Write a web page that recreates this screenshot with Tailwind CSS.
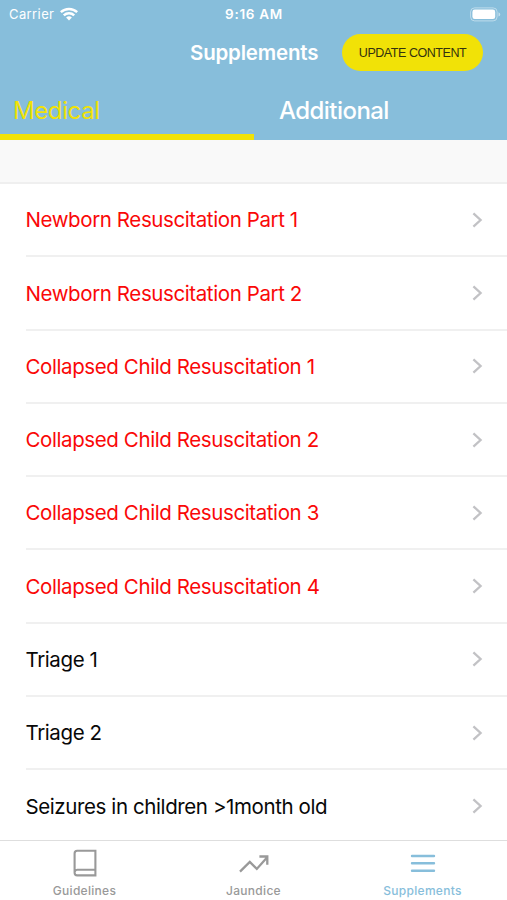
<!DOCTYPE html>
<html lang="en">
<head>
<meta charset="utf-8">
<title>Supplements</title>
<script src="https://cdn.jsdelivr.net/npm/@tailwindcss/browser@4"></script>
</head>
<body class="bg-white">
<div class="w-[507px] h-[900px] flex flex-col overflow-hidden bg-white font-['Inter','Liberation_Sans',sans-serif]">
  <header class="h-[140px] shrink-0 bg-[#87bedb] text-white flex flex-col">
    <div class="h-[27px] grid grid-cols-[160px_1fr_160px] items-center pl-[7px] pr-[6px] text-[13px] leading-[28px]">
      <div class="flex items-center gap-[6px] pl-[2px]">
        <span class="tracking-[0.4px]">Carrier</span>
        <svg class="w-[18px] h-[14px]" viewBox="0 0 18 14" fill="none" stroke="#fff" stroke-width="2.5"><path d="M.8 5.2a11.8 11.8 0 0 1 16.4 0M3.8 8.4a7.5 7.5 0 0 1 10.4 0"/><path d="M9 13.6l-2.9-3a4.2 4.2 0 0 1 5.8 0z" fill="#fff" stroke="none"/></svg>
      </div>
      <div class="text-center font-semibold text-[13.5px] tracking-[0.7px]"><span>9:16 AM</span></div>
      <div class="flex justify-end">
        <svg class="w-[31px] h-[15px]" viewBox="0 0 31 15"><rect x=".6" y=".9" width="26.5" height="13" rx="4" fill="none" stroke="#fff" stroke-opacity=".45"/><rect x="2.4" y="2.6" width="22.8" height="9.4" rx="2.3" fill="#fff"/><path d="M28.5 5.2v4.4q1.8-.7 1.8-2.2t-1.8-2.2z" fill="#fff" fill-opacity=".5"/></svg>
      </div>
    </div>
    <div class="h-[53px] flex items-start pl-[190px] pt-[7px]">
      <h1 class="w-[152px] text-[20.5px] leading-[37px] font-semibold tracking-[-0.2px] whitespace-nowrap">Supplements</h1>
      <button class="w-[141px] h-[37px] rounded-full bg-[#f1e207] text-[#33320f] text-[12.5px] tracking-[-0.45px] pt-[2px] font-['Liberation_Sans',sans-serif] whitespace-nowrap">UPDATE CONTENT</button>
    </div>
    <nav class="h-[60px] grid grid-cols-[254px_253px] text-[24px] leading-[54px] tracking-[-0.4px]">
      <div class="h-[60px] pl-[13px] pt-[4px] text-[#f1e207] border-b-[6px] border-[#f1e207]"><div class="h-[50px]">Medical</div></div>
      <div class="pl-[25px] pt-[4px] font-medium tracking-[-0.55px]"><span>Additional</span></div>
    </nav>
  </header>
  <div class="h-[44px] shrink-0 bg-[#f9f9f9] border-b-2 border-[#efefef]"></div>
  <ul id="rows" class="h-[656px] shrink-0 overflow-hidden text-[20.5px] tracking-[-0.4px]"></ul>
  <footer class="h-[60px] shrink-0 border-t border-[#dedede] bg-white grid grid-cols-3 text-[12px] leading-[16px] font-medium text-[#999] tracking-[0.3px]">
    <div class="flex flex-col items-center pt-[7px] gap-[5px]">
      <svg class="w-[30px] h-[30px]" viewBox="0 0 30 30" fill="none" stroke="#999" stroke-width="2.1"><path d="M25.4 2.8H7.2a2.6 2.6 0 0 0-2.6 2.6v19.4a2.6 2.6 0 0 0 2.6 2.6h18.2zM4.8 23.6a2.6 2.6 0 0 1 2.4-1.9h18.2"/></svg>
      <span>Guidelines</span>
    </div>
    <div class="flex flex-col items-center pt-[7px] gap-[5px]">
      <svg class="w-[30px] h-[30px]" viewBox="0 0 30 30" fill="none" stroke="#999" stroke-width="2.3"><path d="M1 23.6l9.8-9.7 7 7L28 9.4M20.4 8.5h7.9v8.2"/></svg>
      <span>Jaundice</span>
    </div>
    <div class="flex flex-col items-center pt-[7px] gap-[5px] text-[#87bedb]">
      <svg class="w-[30px] h-[30px]" viewBox="0 0 30 30" fill="none" stroke="#87bedb" stroke-width="2.4" stroke-linecap="round"><path d="M4 8h22M4 15.3h22M4 22.8h22"/></svg>
      <span>Supplements</span>
    </div>
  </footer>
</div>
<script>
const items = ["Newborn Resuscitation Part 1","Newborn Resuscitation Part 2","Collapsed Child Resuscitation 1","Collapsed Child Resuscitation 2","Collapsed Child Resuscitation 3","Collapsed Child Resuscitation 4","Triage 1","Triage 2","Seizures in children >1month old"];
document.getElementById("rows").innerHTML = items.map((t, i) => `
<li class="h-[73.3px] pl-[26px] flex"><div class="flex-1 flex items-center justify-between pr-[24px] border-b-2 border-[#f0f0f0]">
<span class="${i < 6 ? "text-[#fa0808]" : "text-[#080808]"} pt-[2px] -ml-[0.5px] whitespace-nowrap">${t.replace(">", "&gt;")}</span>
<svg class="w-[11px] h-[16px]" viewBox="0 0 11 16" fill="none" stroke="#c2c2c5" stroke-width="2.3"><path d="M1.4 1.3L8.6 8l-7.2 6.7"/></svg>
</div></li>`).join("");
</script>
</body>
</html>
